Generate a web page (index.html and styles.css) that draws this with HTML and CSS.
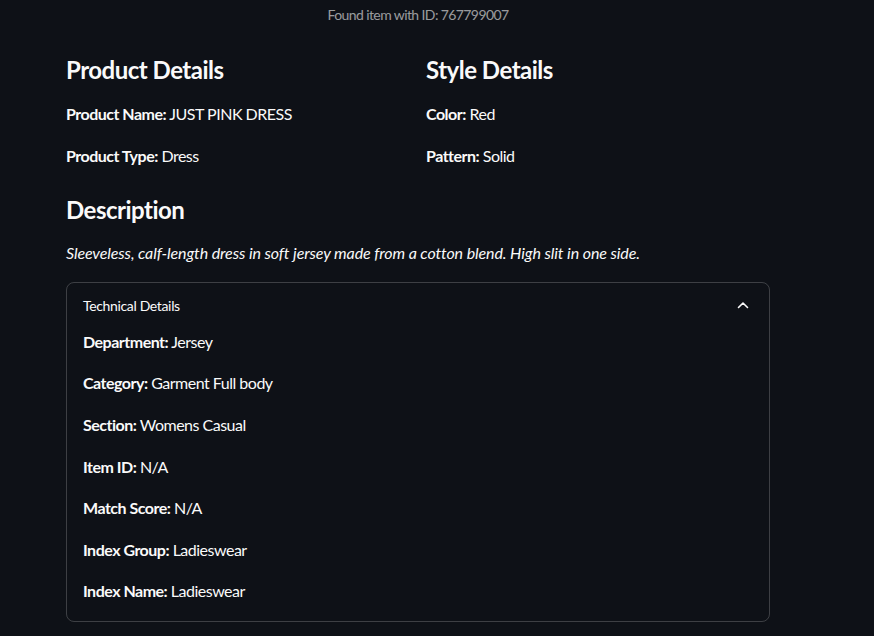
FILE: index.html
```html
<!DOCTYPE html>
<html>
<head>
<meta charset="utf-8">
<link rel="stylesheet" href="styles.css">
</head>
<body>
<main class="main">
  <p class="caption">Found item with ID: 767799007</p>
  <div class="columns">
    <div class="col">
      <h3 class="h3">Product Details</h3>
      <p class="row"><strong>Product Name:</strong> JUST PINK DRESS</p>
      <p class="row"><strong>Product Type:</strong> Dress</p>
    </div>
    <div class="col">
      <h3 class="h3">Style Details</h3>
      <p class="row"><strong>Color:</strong> Red</p>
      <p class="row"><strong>Pattern:</strong> Solid</p>
    </div>
  </div>
  <h3 class="h3 desc-title">Description</h3>
  <p class="row desc"><em>Sleeveless, calf-length dress in soft jersey made from a cotton blend. High slit in one side.</em></p>
  <section class="expander">
    <div class="summary">
      <span>Technical Details</span>
      <svg class="chev" width="12" height="8" viewBox="0 0 12 8"><path d="M1.5 6.5 L6 2 L10.5 6.5" fill="none" stroke="#fafafa" stroke-width="1.6" stroke-linecap="round" stroke-linejoin="round"/></svg>
    </div>
    <div class="exp-body">
      <p class="row"><strong>Department:</strong> Jersey</p>
      <p class="row"><strong>Category:</strong> Garment Full body</p>
      <p class="row"><strong>Section:</strong> Womens Casual</p>
      <p class="row"><strong>Item ID:</strong> N/A</p>
      <p class="row"><strong>Match Score:</strong> N/A</p>
      <p class="row"><strong>Index Group:</strong> Ladieswear</p>
      <p class="row"><strong>Index Name:</strong> Ladieswear</p>
    </div>
  </section>
</main>
</body>
</html>
```
FILE: styles.css
```css
html, body {
  margin: 0;
  padding: 0;
  background: #0e1117;
  color: #fafafa;
  font-family: "Lato", "Noto Sans", sans-serif;
  height: 100%;
  overflow: hidden;
}
.main {
  width: 704px;
  margin-left: 66px;
  display: flex;
  flex-direction: column;
}
p { margin: 0; }
.caption {
  margin-top: 4px;
  font-size: 14px;
  line-height: 21px;
  text-align: center;
  letter-spacing: -0.6px;
  color: rgba(250, 250, 250, 0.6);
}
.columns {
  display: grid;
  grid-template-columns: 1fr 1fr;
  column-gap: 16px;
  margin-top: 29px;
}
.col {
  display: flex;
  flex-direction: column;
}
.h3 {
  margin: 0;
  font-size: 24px;
  line-height: 32px;
  font-weight: 700;
  letter-spacing: -0.5px;
}
.col .h3 { margin-bottom: 15px; }
.row {
  font-size: 16px;
  line-height: 25.6px;
  letter-spacing: -0.5px;
}
.row + .row { margin-top: 16px; }
.row strong { font-weight: 700; }
.desc-title { margin-top: 26px; }
.desc { margin-top: 14px; letter-spacing: -0.1px; }
.expander {
  margin-top: 16px;
  border: 1px solid rgba(250, 250, 250, 0.2);
  border-radius: 8px;
  display: flex;
  flex-direction: column;
}
.summary {
  display: flex;
  align-items: center;
  justify-content: space-between;
  padding: 12px 20px 13px 16px;
  font-size: 14px;
  line-height: 21px;
  letter-spacing: -0.35px;
}
.chev { display: block; }
.exp-body {
  display: flex;
  flex-direction: column;
  padding: 0 16px 17px 16px;
}
```
